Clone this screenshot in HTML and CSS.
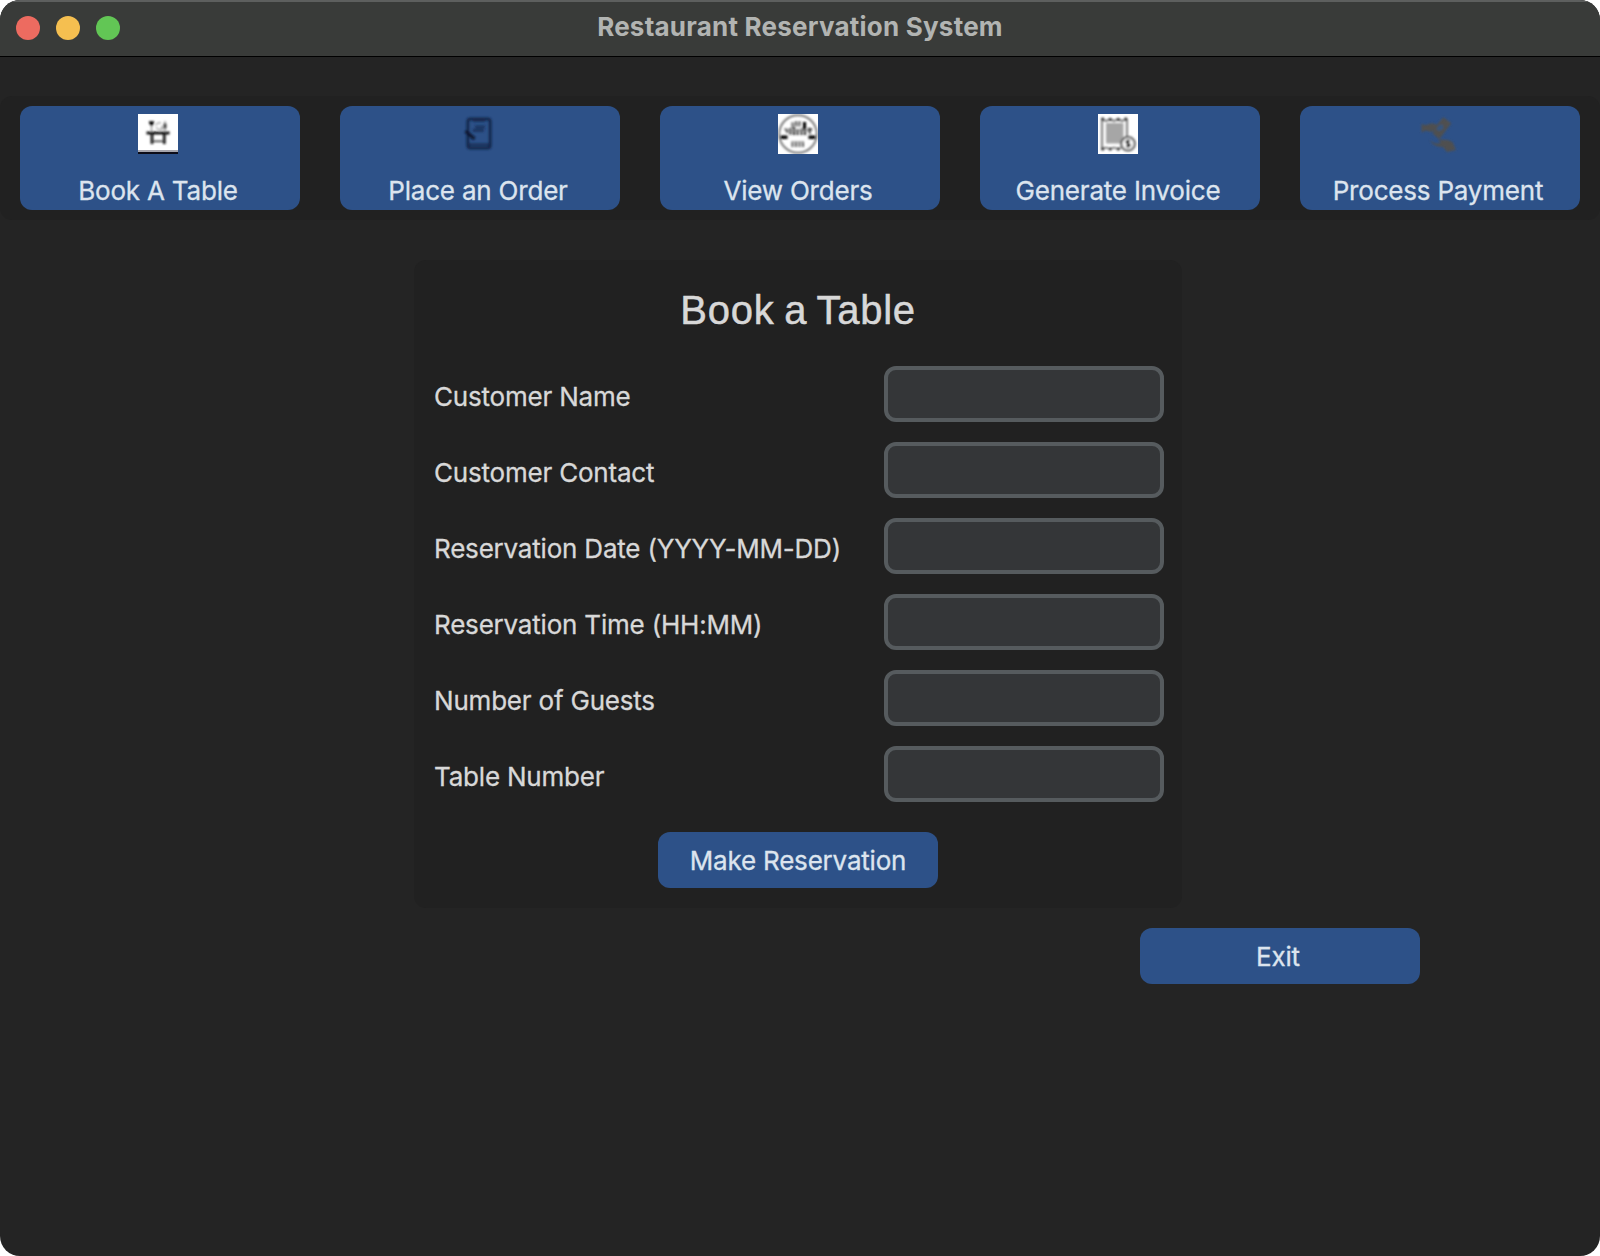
FILE: index.html
```html
<!DOCTYPE html>
<html lang="en">
<head>
<meta charset="utf-8">
<title>Restaurant Reservation System</title>
<link rel="stylesheet" href="styles.css">
</head>
<body>
<div class="window">
  <header class="titlebar">
    <div class="lights"><span class="light close"></span><span class="light minimize"></span><span class="light maximize"></span></div>
    <h1 class="window-title">Restaurant Reservation System</h1>
  </header>
  <nav class="toolbar">
    <button class="btn tool">
      <svg class="icon" viewBox="0 0 40 40">
        <defs><filter id="soften" filterUnits="userSpaceOnUse" x="0" y="0" width="40" height="40"><feGaussianBlur stdDeviation="0.8"/></filter></defs>
        <rect width="40" height="40" fill="#fff"/>
        <rect y="36" width="40" height="2" fill="#a5a5ad"/><rect y="38" width="40" height="2" fill="#0c0c18"/>
        <g filter="url(#soften)">
          <path d="M8.500 19h23" stroke="#000" stroke-width="2.800"/>
          <path d="M14 20v10M26.300 20v10" stroke="#111" stroke-width="2.600"/>
          <path d="M14 27.300h12" stroke="#333" stroke-width="1.500"/>
          <path d="M13.500 10v8M27 7v11" stroke="#888" stroke-width="1.200"/>
          <path d="M11 8.500h5M12 10.300h3" stroke="#000" stroke-width="2.600"/>
          <path d="M27 9.500v5" stroke="#333" stroke-width="2.800"/>
          <path d="M17.500 11.500q2-3.500 5.500-2.500M18 13.500q3 3 5 2" stroke="#aaa" stroke-width="1.400" fill="none"/>
          <path d="M24 12v4" stroke="#888" stroke-width="1.400"/>
        </g>
      </svg>
      <span class="caption">Book A Table</span>
    </button>
    <button class="btn tool">
      <svg class="icon" viewBox="0 0 40 40">
        <g filter="url(#soften)" fill="none" stroke="#14284c">
          <rect x="9.800" y="5" width="22.400" height="29" rx="2.500" stroke-width="2.800"/>
          <path d="M10 30.500h22" stroke-width="1.800"/>
          <path d="M15 6.500h12" stroke-width="2.200"/>
          <path d="M17 13h10M14.700 16.500h11" stroke="#1a3460" stroke-width="3"/>
          <path d="M7.500 17l9 8" stroke="#0b1830" stroke-width="3.500"/>
        </g>
      </svg>
      <span class="caption">Place an Order</span>
    </button>
    <button class="btn tool">
      <svg class="icon" viewBox="0 0 40 40">
        <rect width="40" height="40" fill="#fff"/>
        <g filter="url(#soften)" fill="none">
          <circle cx="20" cy="20" r="18.800" stroke="#777" stroke-width="1.900"/>
          <path d="M14.500 8.500v5M18 7.500v5M21.500 7.500v5" stroke="#333" stroke-width="2.200"/>
          <path d="M13 10.800h10" stroke="#999" stroke-width="2.500"/>
          <path d="M26.500 8v9" stroke="#000" stroke-width="3.200"/>
          <path d="M7 14.500l3 4M12.500 14v6.500M16 13v8M19.500 15v6M23.500 14.500v6.500M27 15v6M30.500 14l1.500 5.500M34 15l-3 1" stroke="#222" stroke-width="2"/>
          <path d="M6.500 15.500h5M11 16.500h20" stroke="#888" stroke-width="1.500"/>
          <path d="M2.500 23.300h7M30.500 23.300h7" stroke="#000" stroke-width="3.400"/>
          <path d="M14.500 27.500v5.500M18 27.500v5.500M21.500 27.500v5.500M25 27.500v5.500" stroke="#555" stroke-width="1.900"/>
          <path d="M13.500 28h12.500" stroke="#999" stroke-width="1"/>
        </g>
      </svg>
      <span class="caption">View Orders</span>
    </button>
    <button class="btn tool">
      <svg class="icon" viewBox="0 0 40 40">
        <rect width="40" height="40" fill="#fff"/>
        <g filter="url(#soften)" fill="none">
          <path d="M8 9h17.500v20.500H8z" fill="#a6a6a6"/>
          <path d="M4 4.500v31M29 4.500v18" stroke="#666" stroke-width="1.700"/>
          <path d="M4 5l4 2 4-2 4 2 4-2 4 2 4.500-2M4 35l4-1.500 4 1.500 4-1.500 4 1.500 3-1" stroke="#666" stroke-width="1.600"/>
          <path d="M3.500 5h2.500M11 5.500h2.500M19 5.500h2.500M26.500 5h2.500M3.500 35h2.500M11 35h2.500M19 35h2.500" stroke="#111" stroke-width="2.400"/>
          <circle cx="30" cy="29.700" r="6.700" fill="#fff" stroke="#555" stroke-width="2.200"/>
          <path d="M32 27.300q-3.500-1.500-3.800.7c0 2 3.800 1 3.800 3.100q-.4 2-4 .7M30 25.500v8.500" stroke="#000" stroke-width="1.700"/>
        </g>
      </svg>
      <span class="caption">Generate Invoice</span>
    </button>
    <button class="btn tool">
      <svg class="icon" viewBox="0 0 40 40">
        <g filter="url(#soften)" fill="#4f504f">
          <path d="M25.300 3.200l8 6.100L21.300 25.200l-7-5.900 2.200-2-4 .5-5-1.300-4 2V9.700l3.500 1.500L14 9.200l5 1.500z"/>
          <path d="M24.500 10.500q-5 0-6 5.500 5 2 7-2z" fill="#35557f"/>
          <path d="M11.500 25.700q5 4.500 10 3.800l1.500-2-3-.5 1.500-1.500 8.500.5 4.500 2 3.500 8-9 2-4-5Q16 33.500 11.500 25.700z"/>
        </g>
      </svg>
      <span class="caption">Process Payment</span>
    </button>
  </nav>
  <main class="content">
    <form class="panel">
      <h2 class="heading">Book a Table</h2>
      <div class="fields">
        <label class="row"><span class="name">Customer Name</span><input class="field" type="text"></label>
        <label class="row"><span class="name">Customer Contact</span><input class="field" type="text"></label>
        <label class="row"><span class="name">Reservation Date (YYYY-MM-DD)</span><input class="field" type="text"></label>
        <label class="row"><span class="name">Reservation Time (HH:MM)</span><input class="field" type="text"></label>
        <label class="row"><span class="name">Number of Guests</span><input class="field" type="text"></label>
        <label class="row"><span class="name">Table Number</span><input class="field" type="text"></label>
      </div>
      <button class="btn action" type="button"><span class="caption">Make Reservation</span></button>
    </form>
    <button class="btn action exit" type="button"><span class="caption">Exit</span></button>
  </main>
</div>
</body>
</html>
```
FILE: styles.css
```css
* { box-sizing: border-box; }
body {
  margin: 0;
  background: #fff;
  font-family: Inter, "Liberation Sans", sans-serif;
}
.window {
  width: 1600px;
  height: 1256px;
  border-radius: 20px;
  overflow: hidden;
  background: #242424;
}
.titlebar {
  height: 57px;
  display: grid;
  grid-template-columns: 200px 1fr 200px;
  align-items: center;
  background: #393b39;
  border-top: 2px solid #5d5f5e;
  border-bottom: 1px solid #000;
  padding-bottom: 2px;
}
.lights { display: flex; gap: 16px; padding-left: 16px; }
.light { width: 24px; height: 24px; border-radius: 50%; }
.close { background: #ed6b60; }
.minimize { background: #f5bf50; }
.maximize { background: #62c655; }
.window-title {
  margin: 0;
  text-align: center;
  font-size: 26px;
  line-height: 32px;
  font-weight: 700;
  letter-spacing: 0.22px;
  color: #b2b4b2;
  padding-bottom: 2px;
}
.toolbar {
  display: flex;
  gap: 40px;
  margin-top: 39px;
  padding: 10px 20px;
  border-radius: 12px;
  background: #212121;
}
.btn {
  width: 280px;
  border: 0;
  border-radius: 12px;
  background: #2d5188;
  color: #dce4ee;
  font: 400 26px/32px Inter, "Liberation Sans", sans-serif;
  display: flex;
  flex-direction: column;
  align-items: center;
  padding: 0 4px 0 0;
}
.caption, .name {
  letter-spacing: -0.2px;
  -webkit-text-stroke: 0.3px currentColor;
}
.tool { height: 104px; padding-top: 8px; justify-content: space-between; padding-bottom: 3px; }
.icon { width: 40px; height: 40px; display: block; }
.content {
  display: flex;
  flex-direction: column;
  padding: 40px 180px 0 414px;
}
.panel {
  width: 768px;
  height: 648px;
  padding: 27px 18px 20px 20px;
  border-radius: 12px;
  background: #212121;
  display: flex;
  flex-direction: column;
}
.heading {
  margin: 0 2px 33px 0;
  text-align: center;
  font: 400 40px/46px "Liberation Sans", Arial, sans-serif;
  letter-spacing: 0.75px;
  word-spacing: -2px;
  -webkit-text-stroke: 0.5px currentColor;
  color: #d8d8d8;
}
.fields { display: flex; flex-direction: column; gap: 20px; }
.row { display: flex; justify-content: space-between; height: 56px; }
.name { font-size: 26px; line-height: 32px; padding-top: 15px; color: #d8d8d8; }
.field {
  width: 280px;
  height: 56px;
  border: 4px solid #565b5e;
  border-radius: 12px;
  background: #343638;
  padding: 0 12px;
  color: #dce4ee;
  font-size: 26px;
}
.action { height: 56px; padding-top: 2px; justify-content: center; }
.panel .action { margin: 30px 0 0 224px; padding-right: 0; }
.exit { align-self: flex-end; margin-top: 20px; }
```
